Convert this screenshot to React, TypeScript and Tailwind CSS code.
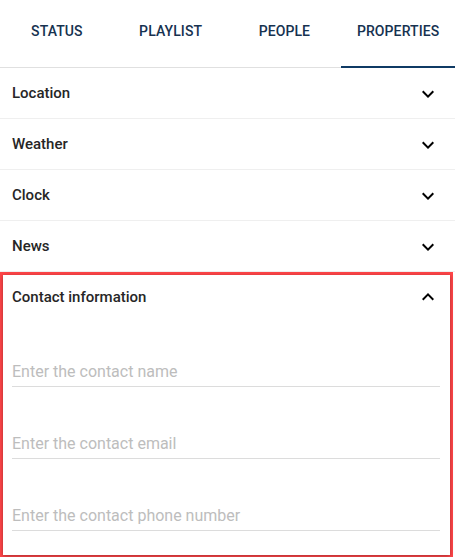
import React from "react";

const Chevron = ({ up = false }: { up?: boolean }) => (
  <svg width="24" height="24" viewBox="0 0 24 24" className={up ? "rotate-180" : ""}>
    <path d="M7.41 8.59 12 13.17l4.59-4.58L18 10l-6 6-6-6z" fill="#000" />
  </svg>
);

const tabs = ["STATUS", "PLAYLIST", "PEOPLE", "PROPERTIES"];
const rows = ["Location", "Weather", "Clock", "News"];
const fields = ["Enter the contact name", "Enter the contact email", "Enter the contact phone number"];

export default function App() {
  return (
    <div className="w-[455px] h-[557px] bg-white overflow-hidden" style={{ fontFamily: "Roboto, 'Liberation Sans', sans-serif" }}>
      <div className="flex h-[68px] border-b border-[#e0e0e0] relative">
        {tabs.map((t, i) => (
          <div key={t} className="flex-1 relative flex items-center justify-center pb-[5px] text-[14px] font-medium text-[#163250] tracking-[0.1px]">
            {t}
            {i === 3 && <div className="absolute left-0 right-0 bottom-[-1px] h-[2px] bg-[#0f3a64]" />}
          </div>
        ))}
      </div>
      {rows.map((r) => (
        <div key={r} className="flex items-center justify-between h-[51px] pl-3 pr-[15px] border-b border-[#efefef] pt-[1px]">
          <span className="text-[15px] font-medium text-[#262626]">{r}</span>
          <Chevron />
        </div>
      ))}
      <div className="w-[453px] h-[286px] border-[3px] border-[#ff4548]">
        <div className="h-full shadow-[0_1px_4px_rgba(0,0,0,0.35)] pl-[9px] pr-[10px]">
          <div className="flex items-center justify-between h-[44px]">
            <span className="text-[15px] font-medium text-[#262626]">Contact information</span>
            <Chevron up />
          </div>
          {fields.map((f, i) => (
            <div key={f} className={i === 0 ? "pt-[37px]" : "pt-[41px]"}>
              <input
                placeholder={f}
                className="w-full h-[31px] border-b border-[#dcdcdc] outline-none text-[16px] placeholder:text-[#bdbdbd]"
                style={{ fontFamily: "Roboto, 'Liberation Sans', sans-serif" }}
              />
            </div>
          ))}
        </div>
      </div>
    </div>
  );
}
